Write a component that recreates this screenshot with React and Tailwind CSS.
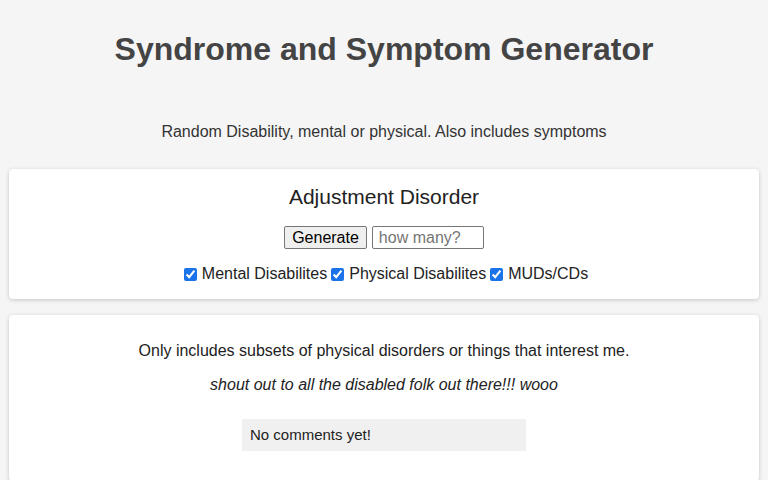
import { useState } from 'react';

const App = () => {
  const [mental, setMental] = useState(true);
  const [physical, setPhysical] = useState(true);
  const [muds, setMuds] = useState(true);

  return (
    <div className="min-h-screen bg-[#f5f5f5] px-[9px] text-center font-['Liberation_Sans',Arial,sans-serif] text-[#333]">
      <h1 className="pt-[31px] text-[32px] font-bold leading-[37px] text-[#444]">Syndrome and Symptom Generator</h1>
      <p className="mt-[55px] text-[16px] leading-[18px]">Random Disability, mental or physical. Also includes symptoms</p>

      {/* Generator card */}
      <div className="mt-[28px] rounded bg-white pt-[16px] pb-[16px] shadow-[0_1px_4px_rgba(0,0,0,0.2)]">
        <h2 className="text-[21px] leading-[24px] text-[#222]">Adjustment Disorder</h2>
        <div className="mt-[17px] flex items-center justify-center gap-[5px]">
          <button className="h-[23px] rounded-[2px] border border-[#767676] bg-[#efefef] px-[7px] text-[16px] leading-[18px] text-black">Generate</button>
          <input
            type="text"
            placeholder="how many?"
            className="h-[23px] w-[112px] rounded-[2px] border border-[#767676] px-[6px] text-[16px] text-black placeholder:text-[#757575]"
          />
        </div>
        <div className="mt-[16px] flex items-center justify-center text-[16px] leading-[18px] text-[#222]">
          <label className="flex items-center">
            <input type="checkbox" checked={mental} onChange={() => setMental(!mental)} className="ml-[4px] mr-[5px] h-[13px] w-[13px] accent-[#1a73e8]" />
            Mental Disabilites
          </label>
          <label className="flex items-center">
            <input type="checkbox" checked={physical} onChange={() => setPhysical(!physical)} className="ml-[4px] mr-[5px] h-[13px] w-[13px] accent-[#1a73e8]" />
            Physical Disabilites
          </label>
          <label className="flex items-center">
            <input type="checkbox" checked={muds} onChange={() => setMuds(!muds)} className="ml-[4px] mr-[5px] h-[13px] w-[13px] accent-[#1a73e8]" />
            MUDs/CDs
          </label>
        </div>
      </div>

      {/* Info card */}
      <div className="mt-[16px] rounded bg-white pt-[27px] pb-[30px] text-[16px] leading-[18px] text-[#222] shadow-[0_1px_4px_rgba(0,0,0,0.2)]">
        <p>Only includes subsets of physical disorders or things that interest me.</p>
        <p className="mt-[16px] italic">shout out to all the disabled folk out there!!! wooo</p>
        <div className="mx-auto mt-[25px] w-[284px] bg-[#f0f0f0] px-[8px] py-[7px] text-left text-[15px] leading-[18px]">No comments yet!</div>
      </div>
    </div>
  );
};

export default App;
